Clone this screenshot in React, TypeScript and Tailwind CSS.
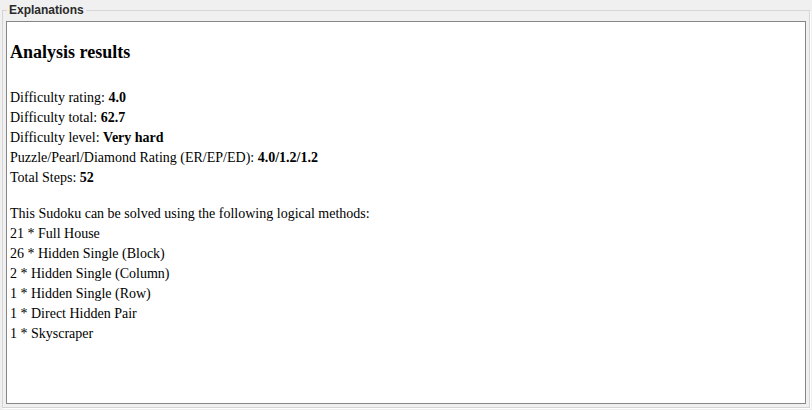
import React from "react";

export default function App() {
  const serif = { fontFamily: '"Liberation Serif", "Times New Roman", serif' };
  return (
    <div className="w-[812px] h-[410px] bg-[#f0f0f0] pt-[3px] overflow-hidden">
      <fieldset className="ml-[2px] w-[808px] h-[405px] border border-[#d5d5d5] p-0 m-0 shadow-[1px_1px_0_#ffffff]">
        <legend
          className="ml-[4px] px-[2px] h-[14px] leading-[14px] text-[12px] font-bold text-[#2a2a2a]"
          style={{ fontFamily: '"Liberation Sans", Arial, sans-serif' }}
        >
          Explanations
        </legend>
        <div
          className="ml-[3px] mt-[4px] w-[800px] h-[383px] bg-white border border-[#86868a] p-[3px] text-black text-[14px] leading-[20px]"
          style={serif}
        >
          <h3 className="mt-[15px] text-[18px] leading-[24px] font-bold">Analysis results</h3>
          <div className="mt-[24px]">
            <div>
              Difficulty rating: <b>4.0</b>
            </div>
            <div>
              Difficulty total: <b>62.7</b>
            </div>
            <div>
              Difficulty level: <b>Very hard</b>
            </div>
            <div>
              Puzzle/Pearl/Diamond Rating (ER/EP/ED): <b>4.0/1.2/1.2</b>
            </div>
            <div>
              Total Steps: <b>52</b>
            </div>
          </div>
          <div className="mt-[16px]">
            <div>This Sudoku can be solved using the following logical methods:</div>
            <div>21 * Full House</div>
            <div>26 * Hidden Single (Block)</div>
            <div>2 * Hidden Single (Column)</div>
            <div>1 * Hidden Single (Row)</div>
            <div>1 * Direct Hidden Pair</div>
            <div>1 * Skyscraper</div>
          </div>
        </div>
      </fieldset>
    </div>
  );
}
